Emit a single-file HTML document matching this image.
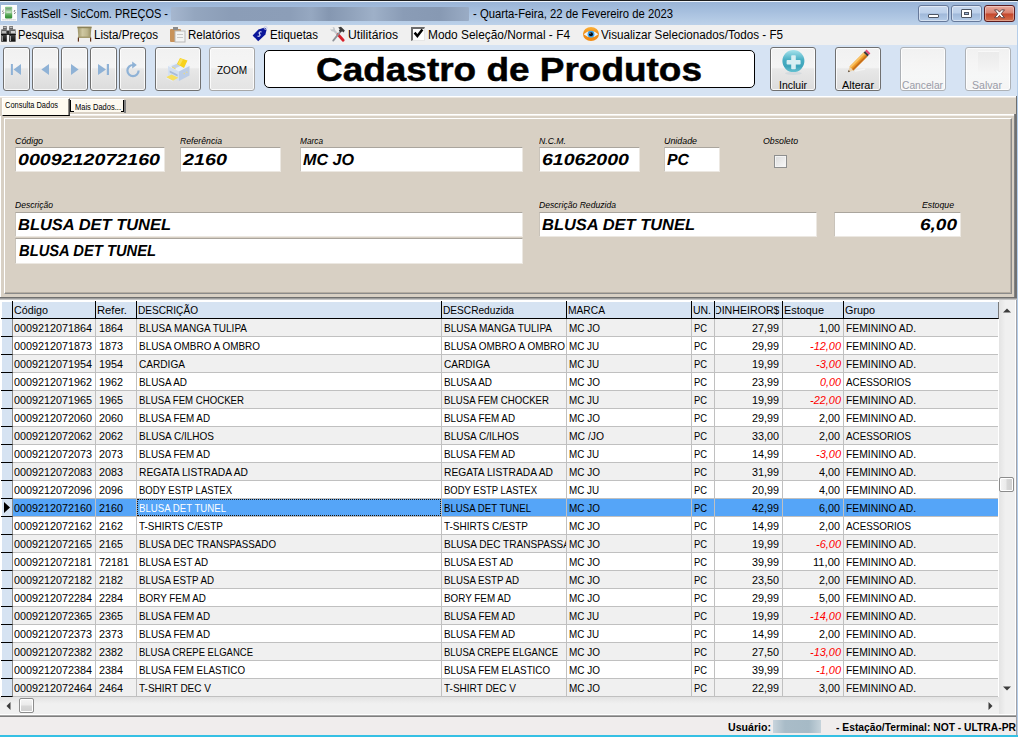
<!DOCTYPE html>
<html><head><meta charset="utf-8"><title>FastSell - SicCom. PREÇOS</title>
<style>
html,body{margin:0;padding:0;}
body{width:1018px;height:737px;overflow:hidden;position:relative;background:#d8d0c4;font-family:'Liberation Sans',sans-serif;}
#w{position:absolute;left:0;top:0;width:1018px;height:737px;overflow:hidden;}
#w div{position:absolute;box-sizing:border-box;}
#w svg{position:absolute;overflow:visible;}
.t{position:absolute;white-space:pre;transform-origin:0 0;display:block;}
</style></head><body><div id="w">
<div style="left:0px;top:0px;width:1018px;height:737px;background:#d8d0c4;"></div>
<div style="left:0px;top:0px;width:1018px;height:25px;background:linear-gradient(#97b2d5 0%,#a6bfde 45%,#bcd1e9 100%);"></div>
<div style="left:0px;top:0px;width:1018px;height:1px;background:#1c1c1c;"></div>
<div style="left:0px;top:1px;width:1018px;height:1px;background:#eef4fb;"></div>
<div style="left:171px;top:7px;width:298px;height:14px;background:linear-gradient(90deg,#a6b7cf 0%,#94a6bf 8%,#8b9db7 20%,#8c9eb8 40%,#96a8c1 47%,#8597b1 53%,#90a2bb 60%,#9eb0c8 68%,#8a9cb6 78%,#8799b3 90%,#9aacc5 100%);border-radius:1px;"></div>
<svg style="left:1px;top:5px" width="16" height="16" viewBox="0 0 16 16"><defs><linearGradient id="ai" x1="0" y1="0" x2="0" y2="1"><stop offset="0" stop-color="#7fc080"/><stop offset="0.45" stop-color="#a9d3a6"/><stop offset="0.7" stop-color="#58a858"/><stop offset="1" stop-color="#2c8a2e"/></linearGradient></defs><rect x="0" y="0" width="16" height="16" fill="#fdfdfd"/><rect x="4" y="1.8" width="7.2" height="11.6" rx="0.8" fill="url(#ai)"/><rect x="5" y="3.2" width="5" height="1.2" fill="#7a9a80"/><rect x="5.4" y="6.6" width="4.4" height="1" fill="#e4eee4"/><path d="M2.6 5 L1.4 6.2 L2.8 7.6 L1.6 9" stroke="#7a7a7a" stroke-width="1" fill="none"/><path d="M14.2 5 L13 6.2 L14.4 7.6 L13.2 9" stroke="#7a7a7a" stroke-width="1" fill="none"/><path d="M1.5 14.8 L14.5 14.8" stroke="#b4b4b4" stroke-width="0.9" stroke-dasharray="1.2 0.8"/></svg>
<div style="left:918px;top:5px;width:31px;height:17px;border:1px solid #66799a;border-radius:3px;background:linear-gradient(#c7d8ee 0%,#bcd0ea 48%,#9fb8d9 52%,#b4cbe7 100%);box-shadow:inset 0 0 0 1px rgba(255,255,255,.45);"></div>
<div style="left:951px;top:5px;width:31px;height:17px;border:1px solid #66799a;border-radius:3px;background:linear-gradient(#c7d8ee 0%,#bcd0ea 48%,#9fb8d9 52%,#b4cbe7 100%);box-shadow:inset 0 0 0 1px rgba(255,255,255,.45);"></div>
<div style="left:984px;top:5px;width:31px;height:17px;border:1px solid #5a1b1f;border-radius:3px;background:linear-gradient(#e8a99d 0%,#d8806e 48%,#c4452b 52%,#d4714d 100%);box-shadow:inset 0 0 0 1px rgba(255,255,255,.35);"></div>
<div style="left:928px;top:14px;width:11px;height:4px;background:#fff;border:1px solid #4d5563;border-radius:1px;"></div>
<div style="left:961px;top:9px;width:11px;height:9px;background:#fff;border:1px solid #4d5563;border-radius:1px;"></div>
<div style="left:964px;top:12px;width:5px;height:3px;background:#9db4d6;border:1px solid #4d5563;"></div>
<svg style="left:993px;top:9px" width="13" height="9.6" viewBox="0 0 13 11" preserveAspectRatio="none"><path d="M1.5 1 L4.5 1 L6.5 3.6 L8.5 1 L11.5 1 L8.2 5.5 L11.5 10 L8.5 10 L6.5 7.4 L4.5 10 L1.5 10 L4.8 5.5 Z" fill="#fff" stroke="#5a3a3a" stroke-width="1"/></svg>
<div style="left:0px;top:25px;width:1018px;height:20px;background:#f0f0f0;"></div>
<div style="left:1017px;top:1px;width:1px;height:736px;background:#b4cde9;"></div>
<svg style="left:0px;top:26px" width="16" height="17" viewBox="0 0 16 17"><defs><linearGradient id="bn" x1="0" y1="0" x2="0" y2="1"><stop offset="0" stop-color="#6a6a6a"/><stop offset="1" stop-color="#0c0c0c"/></linearGradient></defs><rect x="3" y="0.3" width="3.8" height="3.2" fill="#4c4c4c"/><rect x="9.2" y="0.3" width="3.8" height="3.2" fill="#4c4c4c"/><rect x="3.4" y="1.2" width="3" height="1" fill="#d8d8d8"/><rect x="9.6" y="1.2" width="3" height="1" fill="#d8d8d8"/><rect x="1.2" y="3.3" width="5.6" height="12.4" fill="url(#bn)"/><rect x="9.2" y="3.3" width="6.4" height="12.4" fill="url(#bn)"/><rect x="6.8" y="4.5" width="2.4" height="4.5" fill="#2c2c2c"/><rect x="2" y="5" width="4" height="2.4" fill="#b8b8b8"/><rect x="10.8" y="5" width="4.2" height="2.4" fill="#d0d0d0"/><rect x="1" y="8" width="5.8" height="1" fill="#101010"/><rect x="9.2" y="8" width="6.6" height="1" fill="#101010"/><rect x="1.8" y="10" width="1" height="5" fill="#a8a8a8"/><rect x="10" y="10" width="1" height="5" fill="#a8a8a8"/></svg>
<svg style="left:77px;top:26px" width="15" height="16" viewBox="0 0 15 16"><defs><linearGradient id="pg" x1="0" y1="0" x2="1" y2="0"><stop offset="0" stop-color="#9c9468"/><stop offset="0.35" stop-color="#cfc8a2"/><stop offset="0.7" stop-color="#bdb58c"/><stop offset="1" stop-color="#938a5e"/></linearGradient></defs><path d="M0.6 1.2 L14.4 1.2 L13.6 11.6 L1.4 11.6 Z" fill="url(#pg)"/><rect x="0.4" y="0.6" width="14.2" height="1.6" fill="#8c8258"/><path d="M1 10.4 L14 10.4 L13.8 12 L1.2 12 Z" fill="#a59c70"/><rect x="0.8" y="11.6" width="1.2" height="4" fill="#5e2e18"/><rect x="13" y="11.6" width="1.2" height="4" fill="#5e2e18"/></svg>
<svg style="left:170px;top:27px" width="16" height="16" viewBox="0 0 16 16"><rect x="0" y="2" width="11" height="13" rx="1" fill="#c8925a"/><rect x="3" y="0" width="5" height="3" fill="#8a8a8a"/><rect x="5" y="4" width="10" height="11" fill="#f4f4f4" stroke="#b8b8b8" stroke-width="1"/><rect x="7" y="7" width="6" height="1" fill="#c8c8c8"/><rect x="7" y="10" width="6" height="1" fill="#c8c8c8"/></svg>
<svg style="left:252px;top:26px" width="16" height="17" viewBox="0 0 16 17"><path d="M6.4 3.6 L12.8 1.6 L14.6 3.4 L13.4 8.4 L6.2 15.2 L0.6 9.4 Z" fill="#0a169a"/><circle cx="13.6" cy="2" r="1.5" fill="none" stroke="#c8cce8" stroke-width="0.9"/><path d="M9.6 6.2 C8.2 5 6.2 6.6 7.6 8 C9 9.4 7 11 5.6 9.8" stroke="#e8ebff" stroke-width="1.1" fill="none"/></svg>
<svg style="left:330px;top:26px" width="16" height="17" viewBox="0 0 16 17"><path d="M3 3.5 L8.5 9" stroke="#c4c8cc" stroke-width="2.2"/><circle cx="2.8" cy="3.2" r="2.2" fill="#c4c8cc"/><circle cx="1.9" cy="2.2" r="1.2" fill="#f0f0f0"/><path d="M8 8.5 L13.2 14.2" stroke="#d8202a" stroke-width="2.8" stroke-linecap="round"/><path d="M10.6 5.4 L3.2 14.6" stroke="#8e9298" stroke-width="1.8" stroke-linecap="round"/><path d="M8.2 1.4 L11 0.8 L14.8 4.6 L13.6 6.4 L12 5.2 L10.6 6.4 L8.8 4.4 L9.8 3.2 Z" fill="#3c3c3c"/></svg>
<div style="left:411px;top:27px;width:14px;height:14px;background:#fff;border-top:2px solid #6c6c6c;border-left:2px solid #6c6c6c;border-right:1px solid #e6e6e6;border-bottom:1px solid #e6e6e6;"></div>
<svg style="left:413px;top:28px" width="11" height="11" viewBox="0 0 11 11"><path d="M1.6 4.6 L4.4 8 L9.4 1.6" stroke="#000" stroke-width="2.5" fill="none" stroke-linejoin="miter"/></svg>
<svg style="left:583px;top:27px" width="16" height="14" viewBox="0 0 16 14"><defs><linearGradient id="eo" x1="0" y1="0" x2="0" y2="1"><stop offset="0" stop-color="#fbb23a"/><stop offset="0.5" stop-color="#f08a12"/><stop offset="1" stop-color="#f28c14"/></linearGradient></defs><ellipse cx="8" cy="7" rx="8" ry="7" fill="url(#eo)"/><path d="M0.6 7.2 Q8 0.6 15.4 7.2 Q8 13.4 0.6 7.2 Z" fill="#eef4fa"/><circle cx="8" cy="7.2" r="3.4" fill="#3a9fe6"/><circle cx="8" cy="7.3" r="2" fill="#0a0a0a"/><circle cx="7" cy="6.2" r="0.8" fill="#8a8a8a"/></svg>
<div style="left:0px;top:45px;width:1017px;height:51px;background:#d6e3f3;"></div>
<div style="left:3px;top:47px;width:27px;height:44px;border:1px solid #707070;border-radius:3px;background:linear-gradient(#f1f1f1 0%,#f4f4f4 46%,#e8e8e8 50%,#dcdcdc 100%);box-shadow:inset 0 0 0 1px rgba(255,255,255,.8);"></div>
<div style="left:32px;top:47px;width:27px;height:44px;border:1px solid #707070;border-radius:3px;background:linear-gradient(#f1f1f1 0%,#f4f4f4 46%,#e8e8e8 50%,#dcdcdc 100%);box-shadow:inset 0 0 0 1px rgba(255,255,255,.8);"></div>
<div style="left:61px;top:47px;width:27px;height:44px;border:1px solid #707070;border-radius:3px;background:linear-gradient(#f1f1f1 0%,#f4f4f4 46%,#e8e8e8 50%,#dcdcdc 100%);box-shadow:inset 0 0 0 1px rgba(255,255,255,.8);"></div>
<div style="left:90px;top:47px;width:27px;height:44px;border:1px solid #707070;border-radius:3px;background:linear-gradient(#f1f1f1 0%,#f4f4f4 46%,#e8e8e8 50%,#dcdcdc 100%);box-shadow:inset 0 0 0 1px rgba(255,255,255,.8);"></div>
<div style="left:119px;top:47px;width:27px;height:44px;border:1px solid #707070;border-radius:3px;background:linear-gradient(#f1f1f1 0%,#f4f4f4 46%,#e8e8e8 50%,#dcdcdc 100%);box-shadow:inset 0 0 0 1px rgba(255,255,255,.8);"></div>
<svg style="left:10px;top:63px" width="14" height="13" viewBox="0 0 14 13"><rect x="0.9" y="1" width="2" height="11" fill="#8fb2d6"/><path d="M11 1 L11 12 L3.6 6.5 Z" fill="#8fb2d6"/></svg>
<svg style="left:40px;top:63px" width="12" height="13" viewBox="0 0 12 13"><path d="M9 1 L9 12 L1.4 6.5 Z" fill="#8fb2d6"/></svg>
<svg style="left:69px;top:63px" width="12" height="13" viewBox="0 0 12 13"><path d="M2 1 L2 12 L9.6 6.5 Z" fill="#8fb2d6"/></svg>
<svg style="left:96px;top:63px" width="14" height="13" viewBox="0 0 14 13"><rect x="10.8" y="1" width="2.2" height="11" fill="#8fb2d6"/><path d="M2 1 L2 12 L10 6.5 Z" fill="#8fb2d6"/></svg>
<svg style="left:124.6px;top:61px" width="16" height="17" viewBox="0 0 16 17"><path d="M8 4 A5.6 5.6 0 1 0 13.6 9.6" stroke="#8fb2d6" stroke-width="2.2" fill="none"/><path d="M7.2 0.4 L11.8 4 L7.2 7.6 Z" fill="#8fb2d6"/></svg>
<div style="left:155px;top:47px;width:46px;height:44px;border:1px solid #707070;border-radius:3px;background:linear-gradient(#f1f1f1 0%,#f4f4f4 46%,#e8e8e8 50%,#dcdcdc 100%);box-shadow:inset 0 0 0 1px rgba(255,255,255,.8);"></div>
<svg style="left:165px;top:56px" width="26" height="27" viewBox="0 0 26 27"><path d="M3 10 L13 5.5 L24.5 10 L14 15.5 Z" fill="#e9f0fa"/><path d="M3 10 L14 15.5 L14 25 L3 20 Z" fill="#d3e0f2"/><path d="M14 15.5 L24.5 10 L24.5 19.5 L14 25 Z" fill="#bccde7"/><path d="M6 10.2 L12.6 7.4 L17 9.2 L10.4 12.2 Z" fill="#c4d2e6"/><path d="M7.2 11.2 L10.6 12.8" stroke="#e8d060" stroke-width="1"/><path d="M12 8 L15 2 L22.5 4.5 L19 12 Z" fill="#f7d21e"/><path d="M12.8 8 L15.4 2.8 L18 3.6 L15 9.2 Z" fill="#fbe25a"/><path d="M4.6 14.4 L12.6 18.4 L12.6 20.4 L4.6 16.4 Z" fill="#a9bcd9"/><path d="M1 21.2 L6.6 18.4 L13.4 21.8 L7.8 24.8 Z" fill="#f6df62"/><path d="M1 21.2 L7.8 24.8 L7.8 25.8 L1 22.2 Z" fill="#e8ecf2"/><circle cx="19.2" cy="17.6" r="0.8" fill="#e8d88a"/><circle cx="21.8" cy="16.2" r="0.8" fill="#e8d88a"/></svg>
<div style="left:209px;top:47px;width:46px;height:44px;border:1px solid #a6a6a6;border-radius:3px;background:linear-gradient(#f3f3f3 0%,#f5f5f5 46%,#ebebeb 50%,#e4e4e4 100%);box-shadow:inset 0 0 0 1px rgba(255,255,255,.8);"></div>
<div style="left:264px;top:50px;width:491px;height:38px;background:#fff;border:1px solid #000;border-radius:5px;"></div>
<div style="left:770px;top:47px;width:46px;height:44px;border:1px solid #707070;border-radius:3px;background:linear-gradient(#f1f1f1 0%,#f4f4f4 46%,#e8e8e8 50%,#dcdcdc 100%);box-shadow:inset 0 0 0 1px rgba(255,255,255,.8);"></div>
<div style="left:835px;top:47px;width:46px;height:44px;border:1px solid #707070;border-radius:3px;background:linear-gradient(#f1f1f1 0%,#f4f4f4 46%,#e8e8e8 50%,#dcdcdc 100%);box-shadow:inset 0 0 0 1px rgba(255,255,255,.8);"></div>
<div style="left:900px;top:47px;width:46px;height:44px;border:1px solid #adb1b6;border-radius:3px;background:linear-gradient(#f1f1f1 0%,#f5f5f5 40%,#f6f7f7 70%,#f4f4f4 100%);box-shadow:inset 0 0 0 1px rgba(255,255,255,.8);"></div>
<div style="left:965px;top:47px;width:46px;height:44px;border:1px solid #adb1b6;border-radius:3px;background:linear-gradient(#f1f1f1 0%,#f5f5f5 40%,#f6f7f7 70%,#f4f4f4 100%);box-shadow:inset 0 0 0 1px rgba(255,255,255,.8);"></div>
<svg style="left:781px;top:49px" width="25" height="27" viewBox="0 0 25 27"><defs><linearGradient id="gi" x1="0" y1="0" x2="0" y2="1"><stop offset="0" stop-color="#a6e2ec"/><stop offset="0.45" stop-color="#48aec3"/><stop offset="0.75" stop-color="#3fa5bb"/><stop offset="1" stop-color="#66c2d2"/></linearGradient></defs><ellipse cx="12.4" cy="24.3" rx="8.5" ry="1.6" fill="#d4dade"/><circle cx="12.4" cy="12.1" r="11" fill="url(#gi)"/><rect x="10.2" y="6.2" width="4.6" height="14" rx="0.8" fill="#d9eff3"/><rect x="5.6" y="10.9" width="14" height="4.6" rx="0.8" fill="#d9eff3"/></svg>
<svg style="left:846px;top:48px" width="26" height="26" viewBox="0 0 26 26"><path d="M9 23.2 L19 21.2" stroke="#f4f4f4" stroke-width="1.2"/><path d="M1.9 24.3 L3.6 18.6 L7.4 22.4 Z" fill="#ecd2ac"/><path d="M1.9 24.3 L2.6 22 L4.1 23.5 Z" fill="#5a4a3a"/><path d="M3.6 18.6 L17.6 4.6 L21.4 8.4 L7.4 22.4 Z" fill="#ef9c28"/><path d="M3.6 18.6 L17.6 4.6 L18.9 5.9 L4.9 19.9 Z" fill="#f9c367"/><path d="M6.1 21.1 L20.1 7.1 L21.4 8.4 L7.4 22.4 Z" fill="#c8701c"/><path d="M17.6 4.6 L19.2 3 L23 6.8 L21.4 8.4 Z" fill="#3a3a3a"/><path d="M19.2 3 L20.6 1.6 L24.4 5.4 L23 6.8 Z" fill="#ea4878"/></svg>
<div style="left:978px;top:51px;width:21px;height:21px;background:linear-gradient(#ebebeb,#f0f0f0 60%,#f5f5f5);border-top:1px solid #f8f8f8;"></div>
<div style="left:0px;top:96px;width:1017px;height:1px;background:#ffffff;"></div>
<div style="left:0px;top:97px;width:1017px;height:1px;background:#ebe6df;"></div>
<div style="left:0px;top:98px;width:1017px;height:200px;background:#d8d0c4;"></div>
<div style="left:2px;top:98px;width:68px;height:18px;background:#fffbf0;border-right:1px solid #404040;border-bottom:1px solid #000;border-left:1px solid #fff;border-top:1px solid #fff;"></div>
<div style="left:68px;top:99px;width:1px;height:16px;background:#8e8a84;"></div>
<div style="left:70px;top:99px;width:54px;height:1px;background:#fff;"></div>
<div style="left:71px;top:100px;width:53px;height:12px;background:#fdf9ef;"></div>
<div style="left:70px;top:100px;width:1px;height:12px;background:#000;"></div>
<div style="left:70px;top:111px;width:4px;height:1px;background:#000;"></div>
<div style="left:123px;top:100px;width:1px;height:12px;background:#000;"></div>
<div style="left:121px;top:111px;width:3px;height:1px;background:#000;"></div>
<div style="left:124px;top:100px;width:2px;height:13px;background:#808080;"></div>
<div style="left:70px;top:114px;width:945px;height:1px;background:#fff;"></div>
<div style="left:70px;top:115px;width:945px;height:1px;background:#f2eee8;"></div>
<div style="left:0px;top:116px;width:1px;height:181px;background:#fff;"></div>
<div style="left:1016px;top:96px;width:1px;height:20px;background:#6e6e6e;"></div>
<div style="left:1014px;top:114px;width:3px;height:184px;background:linear-gradient(90deg,#8c8c8c,#6a6a6a 60%,#787878);"></div>
<div style="left:0px;top:297px;width:1017px;height:1px;background:#6e6e6e;"></div>
<div style="left:0px;top:298px;width:1017px;height:1px;background:#9c9c9c;"></div>
<div style="left:0px;top:299px;width:1017px;height:1px;background:#c4c4c4;"></div>
<div style="left:4px;top:118px;width:1008px;height:176px;background:#d8d0c4;border-top:1px solid #fff;border-left:1px solid #fff;border-right:1px solid #8a8a8a;border-bottom:1px solid #8a8a8a;"></div>
<div style="left:5px;top:119px;width:1006px;height:174px;border-right:1px solid #b5ada2;border-bottom:1px solid #b5ada2;"></div>
<div style="left:15px;top:147px;width:150px;height:25px;background:#fff;border-top:1px solid #aaa59d;border-left:1px solid #c9c3ba;border-right:1px solid #ece8e2;border-bottom:1px solid #ece8e2;"></div>
<div style="left:180px;top:147px;width:101px;height:25px;background:#fff;border-top:1px solid #aaa59d;border-left:1px solid #c9c3ba;border-right:1px solid #ece8e2;border-bottom:1px solid #ece8e2;"></div>
<div style="left:300px;top:147px;width:223px;height:25px;background:#fff;border-top:1px solid #aaa59d;border-left:1px solid #c9c3ba;border-right:1px solid #ece8e2;border-bottom:1px solid #ece8e2;"></div>
<div style="left:539px;top:147px;width:101px;height:25px;background:#fff;border-top:1px solid #aaa59d;border-left:1px solid #c9c3ba;border-right:1px solid #ece8e2;border-bottom:1px solid #ece8e2;"></div>
<div style="left:664px;top:147px;width:56px;height:25px;background:#fff;border-top:1px solid #aaa59d;border-left:1px solid #c9c3ba;border-right:1px solid #ece8e2;border-bottom:1px solid #ece8e2;"></div>
<div style="left:774px;top:155px;width:13px;height:13px;background:linear-gradient(135deg,#dcdcdc,#f8f8f8);border:1px solid #8e8f8f;box-shadow:inset 0 0 0 1px #f4f4f4;"></div>
<div style="left:15px;top:212px;width:508px;height:25px;background:#fff;border-top:1px solid #aaa59d;border-left:1px solid #c9c3ba;border-right:1px solid #ece8e2;border-bottom:1px solid #ece8e2;"></div>
<div style="left:15px;top:238px;width:508px;height:26px;background:#fff;border-top:1px solid #aaa59d;border-left:1px solid #c9c3ba;border-right:1px solid #ece8e2;border-bottom:1px solid #ece8e2;"></div>
<div style="left:539px;top:212px;width:278px;height:25px;background:#fff;border-top:1px solid #aaa59d;border-left:1px solid #c9c3ba;border-right:1px solid #ece8e2;border-bottom:1px solid #ece8e2;"></div>
<div style="left:834px;top:212px;width:127px;height:25px;background:#fff;border-top:1px solid #aaa59d;border-left:1px solid #c9c3ba;border-right:1px solid #ece8e2;border-bottom:1px solid #ece8e2;"></div>
<div style="left:0px;top:300px;width:1017px;height:397px;background:#fff;"></div>
<div style="left:2px;top:302px;width:11px;height:17px;background:#d6e3f2;border-right:1px solid #000;border-bottom:1px solid #000;"></div>
<div style="left:12px;top:301px;width:1px;height:1px;background:#000;"></div>
<div style="left:13px;top:302px;width:83px;height:17px;background:#d6e3f2;border-right:1px solid #000;border-bottom:1px solid #000;"></div>
<div style="left:95px;top:301px;width:1px;height:1px;background:#000;"></div>
<div style="left:96px;top:302px;width:41px;height:17px;background:#d6e3f2;border-right:1px solid #000;border-bottom:1px solid #000;"></div>
<div style="left:136px;top:301px;width:1px;height:1px;background:#000;"></div>
<div style="left:137px;top:302px;width:305px;height:17px;background:#d6e3f2;border-right:1px solid #000;border-bottom:1px solid #000;"></div>
<div style="left:441px;top:301px;width:1px;height:1px;background:#000;"></div>
<div style="left:442px;top:302px;width:125px;height:17px;background:#d6e3f2;border-right:1px solid #000;border-bottom:1px solid #000;"></div>
<div style="left:566px;top:301px;width:1px;height:1px;background:#000;"></div>
<div style="left:567px;top:302px;width:125px;height:17px;background:#d6e3f2;border-right:1px solid #000;border-bottom:1px solid #000;"></div>
<div style="left:691px;top:301px;width:1px;height:1px;background:#000;"></div>
<div style="left:692px;top:302px;width:23px;height:17px;background:#d6e3f2;border-right:1px solid #000;border-bottom:1px solid #000;"></div>
<div style="left:714px;top:301px;width:1px;height:1px;background:#000;"></div>
<div style="left:715px;top:302px;width:68px;height:17px;background:#d6e3f2;border-right:1px solid #000;border-bottom:1px solid #000;"></div>
<div style="left:782px;top:301px;width:1px;height:1px;background:#000;"></div>
<div style="left:783px;top:302px;width:61px;height:17px;background:#d6e3f2;border-right:1px solid #000;border-bottom:1px solid #000;"></div>
<div style="left:843px;top:301px;width:1px;height:1px;background:#000;"></div>
<div style="left:844px;top:302px;width:155px;height:17px;background:#d6e3f2;border-right:1px solid #7a7a7a;border-bottom:1px solid #000;"></div>
<div style="left:1px;top:318px;width:1px;height:1px;background:#000;"></div>
<div style="left:2px;top:319px;width:11px;height:18px;background:#d6e3f2;border-right:1px solid #8c8c8c;border-bottom:1px solid #000;"></div>
<div style="left:1px;top:336px;width:1px;height:1px;background:#000;"></div>
<div style="left:13px;top:319px;width:985px;height:17px;background:#f0f0f0;"></div>
<div style="left:13px;top:336px;width:985px;height:1px;background:#c0c0c0;"></div>
<div style="left:2px;top:337px;width:11px;height:18px;background:#d6e3f2;border-right:1px solid #8c8c8c;border-bottom:1px solid #000;"></div>
<div style="left:1px;top:354px;width:1px;height:1px;background:#000;"></div>
<div style="left:13px;top:337px;width:985px;height:17px;background:#ffffff;"></div>
<div style="left:13px;top:354px;width:985px;height:1px;background:#c0c0c0;"></div>
<div style="left:2px;top:355px;width:11px;height:18px;background:#d6e3f2;border-right:1px solid #8c8c8c;border-bottom:1px solid #000;"></div>
<div style="left:1px;top:372px;width:1px;height:1px;background:#000;"></div>
<div style="left:13px;top:355px;width:985px;height:17px;background:#f0f0f0;"></div>
<div style="left:13px;top:372px;width:985px;height:1px;background:#c0c0c0;"></div>
<div style="left:2px;top:373px;width:11px;height:18px;background:#d6e3f2;border-right:1px solid #8c8c8c;border-bottom:1px solid #000;"></div>
<div style="left:1px;top:390px;width:1px;height:1px;background:#000;"></div>
<div style="left:13px;top:373px;width:985px;height:17px;background:#ffffff;"></div>
<div style="left:13px;top:390px;width:985px;height:1px;background:#c0c0c0;"></div>
<div style="left:2px;top:391px;width:11px;height:18px;background:#d6e3f2;border-right:1px solid #8c8c8c;border-bottom:1px solid #000;"></div>
<div style="left:1px;top:408px;width:1px;height:1px;background:#000;"></div>
<div style="left:13px;top:391px;width:985px;height:17px;background:#f0f0f0;"></div>
<div style="left:13px;top:408px;width:985px;height:1px;background:#c0c0c0;"></div>
<div style="left:2px;top:409px;width:11px;height:18px;background:#d6e3f2;border-right:1px solid #8c8c8c;border-bottom:1px solid #000;"></div>
<div style="left:1px;top:426px;width:1px;height:1px;background:#000;"></div>
<div style="left:13px;top:409px;width:985px;height:17px;background:#ffffff;"></div>
<div style="left:13px;top:426px;width:985px;height:1px;background:#c0c0c0;"></div>
<div style="left:2px;top:427px;width:11px;height:18px;background:#d6e3f2;border-right:1px solid #8c8c8c;border-bottom:1px solid #000;"></div>
<div style="left:1px;top:444px;width:1px;height:1px;background:#000;"></div>
<div style="left:13px;top:427px;width:985px;height:17px;background:#f0f0f0;"></div>
<div style="left:13px;top:444px;width:985px;height:1px;background:#c0c0c0;"></div>
<div style="left:2px;top:445px;width:11px;height:18px;background:#d6e3f2;border-right:1px solid #8c8c8c;border-bottom:1px solid #000;"></div>
<div style="left:1px;top:462px;width:1px;height:1px;background:#000;"></div>
<div style="left:13px;top:445px;width:985px;height:17px;background:#ffffff;"></div>
<div style="left:13px;top:462px;width:985px;height:1px;background:#c0c0c0;"></div>
<div style="left:2px;top:463px;width:11px;height:18px;background:#d6e3f2;border-right:1px solid #8c8c8c;border-bottom:1px solid #000;"></div>
<div style="left:1px;top:480px;width:1px;height:1px;background:#000;"></div>
<div style="left:13px;top:463px;width:985px;height:17px;background:#f0f0f0;"></div>
<div style="left:13px;top:480px;width:985px;height:1px;background:#c0c0c0;"></div>
<div style="left:2px;top:481px;width:11px;height:18px;background:#d6e3f2;border-right:1px solid #8c8c8c;border-bottom:1px solid #000;"></div>
<div style="left:1px;top:498px;width:1px;height:1px;background:#000;"></div>
<div style="left:13px;top:481px;width:985px;height:17px;background:#ffffff;"></div>
<div style="left:13px;top:498px;width:985px;height:1px;background:#c0c0c0;"></div>
<div style="left:2px;top:499px;width:11px;height:18px;background:#d6e3f2;border-right:1px solid #8c8c8c;border-bottom:1px solid #000;"></div>
<div style="left:1px;top:516px;width:1px;height:1px;background:#000;"></div>
<div style="left:13px;top:499px;width:985px;height:17px;background:#55a5f8;"></div>
<div style="left:13px;top:516px;width:985px;height:1px;background:#c0c0c0;"></div>
<div style="left:2px;top:517px;width:11px;height:18px;background:#d6e3f2;border-right:1px solid #8c8c8c;border-bottom:1px solid #000;"></div>
<div style="left:1px;top:534px;width:1px;height:1px;background:#000;"></div>
<div style="left:13px;top:517px;width:985px;height:17px;background:#ffffff;"></div>
<div style="left:13px;top:534px;width:985px;height:1px;background:#c0c0c0;"></div>
<div style="left:2px;top:535px;width:11px;height:18px;background:#d6e3f2;border-right:1px solid #8c8c8c;border-bottom:1px solid #000;"></div>
<div style="left:1px;top:552px;width:1px;height:1px;background:#000;"></div>
<div style="left:13px;top:535px;width:985px;height:17px;background:#f0f0f0;"></div>
<div style="left:13px;top:552px;width:985px;height:1px;background:#c0c0c0;"></div>
<div style="left:442px;top:535px;width:124px;height:17px;overflow:hidden;"><span class="t" style="left:2px;top:3px;font:11px 'Liberation Sans',sans-serif;line-height:12px;transform:scaleX(0.915)">BLUSA DEC TRANSPASSADO</span></div>
<div style="left:2px;top:553px;width:11px;height:18px;background:#d6e3f2;border-right:1px solid #8c8c8c;border-bottom:1px solid #000;"></div>
<div style="left:1px;top:570px;width:1px;height:1px;background:#000;"></div>
<div style="left:13px;top:553px;width:985px;height:17px;background:#ffffff;"></div>
<div style="left:13px;top:570px;width:985px;height:1px;background:#c0c0c0;"></div>
<div style="left:2px;top:571px;width:11px;height:18px;background:#d6e3f2;border-right:1px solid #8c8c8c;border-bottom:1px solid #000;"></div>
<div style="left:1px;top:588px;width:1px;height:1px;background:#000;"></div>
<div style="left:13px;top:571px;width:985px;height:17px;background:#f0f0f0;"></div>
<div style="left:13px;top:588px;width:985px;height:1px;background:#c0c0c0;"></div>
<div style="left:2px;top:589px;width:11px;height:18px;background:#d6e3f2;border-right:1px solid #8c8c8c;border-bottom:1px solid #000;"></div>
<div style="left:1px;top:606px;width:1px;height:1px;background:#000;"></div>
<div style="left:13px;top:589px;width:985px;height:17px;background:#ffffff;"></div>
<div style="left:13px;top:606px;width:985px;height:1px;background:#c0c0c0;"></div>
<div style="left:2px;top:607px;width:11px;height:18px;background:#d6e3f2;border-right:1px solid #8c8c8c;border-bottom:1px solid #000;"></div>
<div style="left:1px;top:624px;width:1px;height:1px;background:#000;"></div>
<div style="left:13px;top:607px;width:985px;height:17px;background:#f0f0f0;"></div>
<div style="left:13px;top:624px;width:985px;height:1px;background:#c0c0c0;"></div>
<div style="left:2px;top:625px;width:11px;height:18px;background:#d6e3f2;border-right:1px solid #8c8c8c;border-bottom:1px solid #000;"></div>
<div style="left:1px;top:642px;width:1px;height:1px;background:#000;"></div>
<div style="left:13px;top:625px;width:985px;height:17px;background:#ffffff;"></div>
<div style="left:13px;top:642px;width:985px;height:1px;background:#c0c0c0;"></div>
<div style="left:2px;top:643px;width:11px;height:18px;background:#d6e3f2;border-right:1px solid #8c8c8c;border-bottom:1px solid #000;"></div>
<div style="left:1px;top:660px;width:1px;height:1px;background:#000;"></div>
<div style="left:13px;top:643px;width:985px;height:17px;background:#f0f0f0;"></div>
<div style="left:13px;top:660px;width:985px;height:1px;background:#c0c0c0;"></div>
<div style="left:2px;top:661px;width:11px;height:18px;background:#d6e3f2;border-right:1px solid #8c8c8c;border-bottom:1px solid #000;"></div>
<div style="left:1px;top:678px;width:1px;height:1px;background:#000;"></div>
<div style="left:13px;top:661px;width:985px;height:17px;background:#ffffff;"></div>
<div style="left:13px;top:678px;width:985px;height:1px;background:#c0c0c0;"></div>
<div style="left:2px;top:679px;width:11px;height:18px;background:#d6e3f2;border-right:1px solid #8c8c8c;border-bottom:1px solid #000;"></div>
<div style="left:1px;top:696px;width:1px;height:1px;background:#000;"></div>
<div style="left:13px;top:679px;width:985px;height:17px;background:#f0f0f0;"></div>
<div style="left:13px;top:696px;width:985px;height:1px;background:#c0c0c0;"></div>
<div style="left:95px;top:319px;width:1px;height:378px;background:#c0c0c0;"></div>
<div style="left:136px;top:319px;width:1px;height:378px;background:#c0c0c0;"></div>
<div style="left:441px;top:319px;width:1px;height:378px;background:#c0c0c0;"></div>
<div style="left:566px;top:319px;width:1px;height:378px;background:#c0c0c0;"></div>
<div style="left:691px;top:319px;width:1px;height:378px;background:#c0c0c0;"></div>
<div style="left:714px;top:319px;width:1px;height:378px;background:#c0c0c0;"></div>
<div style="left:782px;top:319px;width:1px;height:378px;background:#c0c0c0;"></div>
<div style="left:843px;top:319px;width:1px;height:378px;background:#c0c0c0;"></div>
<div style="left:137px;top:499px;width:304px;height:17px;border:1px dotted #1a1208;"></div>
<svg style="left:4px;top:502px" width="6" height="11" viewBox="0 0 6 11"><path d="M0 0 L6 5.5 L0 11 Z" fill="#000"/></svg>
<div style="left:999px;top:300px;width:16px;height:414px;background:linear-gradient(90deg,#e3e3e3,#f0f0f0 40%,#f0f0f0);"></div>
<svg style="left:1003.4px;top:307.5px" width="8" height="5" viewBox="0 0 8 5"><path d="M0 4.5 L4 0.5 L8 4.5 Z" fill="#3c3c3c"/></svg>
<svg style="left:1003.4px;top:686.4px" width="8" height="5" viewBox="0 0 8 5"><path d="M0 0.5 L4 4.5 L8 0.5 Z" fill="#3c3c3c"/></svg>
<div style="left:999px;top:477px;width:15px;height:15px;border:1px solid #8c8c8c;border-radius:2px;background:linear-gradient(90deg,#f4f4f4 0%,#eaeaea 48%,#d8d8d8 52%,#cfcfcf 100%);box-shadow:inset 0 0 0 1px #fff;"></div>
<div style="left:0px;top:697px;width:999px;height:17px;background:linear-gradient(#e3e3e3,#f0f0f0 40%,#f0f0f0);"></div>
<div style="left:1015px;top:300px;width:1px;height:436px;background:#fff;"></div>
<div style="left:1016px;top:300px;width:1px;height:436px;background:#a2a2a8;"></div>
<svg style="left:6.3px;top:701.5px" width="5" height="8" viewBox="0 0 5 8"><path d="M4.5 0 L0.5 4 L4.5 8 Z" fill="#3c3c3c"/></svg>
<svg style="left:987.6px;top:701.5px" width="5" height="8" viewBox="0 0 5 8"><path d="M0.5 0 L4.5 4 L0.5 8 Z" fill="#3c3c3c"/></svg>
<div style="left:19px;top:698px;width:15px;height:15px;border:1px solid #8c8c8c;border-radius:2px;background:linear-gradient(#f4f4f4 0%,#eaeaea 48%,#d8d8d8 52%,#cfcfcf 100%);box-shadow:inset 0 0 0 1px #fff;"></div>
<div style="left:0px;top:714px;width:1016px;height:1px;background:#fff;"></div>
<div style="left:0px;top:715px;width:1016px;height:1px;background:#a8a8a8;"></div>
<div style="left:0px;top:716px;width:1016px;height:1px;background:#7e7e7e;"></div>
<div style="left:0px;top:717px;width:1016px;height:18px;background:#f0eded;"></div>
<div style="left:0px;top:735px;width:1018px;height:2px;background:#35c0e4;"></div>
<div style="left:773px;top:720px;width:48px;height:13px;background:linear-gradient(90deg,#c8d4dc,#a9bcc8 25%,#a6bac6 75%,#c6d3db);"></div>
<span class="t" style="left:21.00px;top:7.00px;font:normal normal 12px 'Liberation Sans',sans-serif;line-height:14px;color:#000;transform:scaleX(0.9147);">FastSell - SicCom. PREÇOS -</span>
<span class="t" style="left:473.00px;top:7.00px;font:normal normal 12px 'Liberation Sans',sans-serif;line-height:14px;color:#000;transform:scaleX(0.9399);">- Quarta-Feira, 22 de Fevereiro de 2023</span>
<span class="t" style="left:18.00px;top:28.00px;font:normal normal 12px 'Liberation Sans',sans-serif;line-height:14px;color:#000;transform:scaleX(0.9316);">Pesquisa</span>
<span class="t" style="left:94.00px;top:28.00px;font:normal normal 12px 'Liberation Sans',sans-serif;line-height:14px;color:#000;transform:scaleX(0.9692);">Lista/Preços</span>
<span class="t" style="left:188.00px;top:28.00px;font:normal normal 12px 'Liberation Sans',sans-serif;line-height:14px;color:#000;transform:scaleX(0.9624);">Relatórios</span>
<span class="t" style="left:270.00px;top:28.00px;font:normal normal 12px 'Liberation Sans',sans-serif;line-height:14px;color:#000;transform:scaleX(0.9591);">Etiquetas</span>
<span class="t" style="left:348.00px;top:28.00px;font:normal normal 12px 'Liberation Sans',sans-serif;line-height:14px;color:#000;transform:scaleX(1.0133);">Utilitários</span>
<span class="t" style="left:428.00px;top:28.00px;font:normal normal 12px 'Liberation Sans',sans-serif;line-height:14px;color:#000;transform:scaleX(0.9903);">Modo Seleção/Normal - F4</span>
<span class="t" style="left:601.00px;top:28.00px;font:normal normal 12px 'Liberation Sans',sans-serif;line-height:14px;color:#000;transform:scaleX(0.9721);">Visualizar Selecionados/Todos - F5</span>
<span class="t" style="left:217.00px;top:64.00px;font:normal normal 11px 'Liberation Sans',sans-serif;line-height:12px;color:#000;transform:scaleX(0.9091);">ZOOM</span>
<span class="t" style="left:316.00px;top:49.50px;font:normal bold 34px 'Liberation Sans',sans-serif;line-height:38px;color:#000;transform:scaleX(1.0868);-webkit-text-stroke:0.5px #000;">Cadastro de Produtos</span>
<span class="t" style="left:779.00px;top:79.00px;font:normal normal 11px 'Liberation Sans',sans-serif;line-height:12px;color:#000;transform:scaleX(0.9542);">Incluir</span>
<span class="t" style="left:842.00px;top:79.00px;font:normal normal 11px 'Liberation Sans',sans-serif;line-height:12px;color:#000;transform:scaleX(0.9875);">Alterar</span>
<span class="t" style="left:902.00px;top:79.00px;font:normal normal 11px 'Liberation Sans',sans-serif;line-height:12px;color:#9a9ca8;transform:scaleX(0.9312);">Cancelar</span>
<span class="t" style="left:972.00px;top:79.00px;font:normal normal 11px 'Liberation Sans',sans-serif;line-height:12px;color:#9a9ca8;transform:scaleX(0.9619);">Salvar</span>
<span class="t" style="left:5.00px;top:100.00px;font:normal normal 9px 'Liberation Sans',sans-serif;line-height:10px;color:#000;transform:scaleX(0.8275);">Consulta Dados</span>
<span class="t" style="left:75.00px;top:102.00px;font:normal normal 9px 'Liberation Sans',sans-serif;line-height:10px;color:#000;transform:scaleX(0.8359);">Mais Dados...</span>
<span class="t" style="left:15.00px;top:136.00px;font:italic normal 9px 'Liberation Sans',sans-serif;line-height:10px;color:#000;transform:scaleX(0.9814);">Código</span>
<span class="t" style="left:18.00px;top:152.00px;font:italic bold 16px 'Liberation Sans',sans-serif;line-height:17px;color:#000;transform:scaleX(1.2274);text-rendering:geometricPrecision;">0009212072160</span>
<span class="t" style="left:180.00px;top:136.00px;font:italic normal 9px 'Liberation Sans',sans-serif;line-height:10px;color:#000;transform:scaleX(0.9648);">Referência</span>
<span class="t" style="left:183.00px;top:152.00px;font:italic bold 16px 'Liberation Sans',sans-serif;line-height:17px;color:#000;transform:scaleX(1.2362);text-rendering:geometricPrecision;">2160</span>
<span class="t" style="left:300.00px;top:136.00px;font:italic normal 9px 'Liberation Sans',sans-serif;line-height:10px;color:#000;transform:scaleX(0.9194);">Marca</span>
<span class="t" style="left:303.00px;top:152.00px;font:italic bold 16px 'Liberation Sans',sans-serif;line-height:17px;color:#000;transform:scaleX(1.0065);text-rendering:geometricPrecision;">MC JO</span>
<span class="t" style="left:539.00px;top:136.00px;font:italic normal 9px 'Liberation Sans',sans-serif;line-height:10px;color:#000;transform:scaleX(0.9643);">N.C.M.</span>
<span class="t" style="left:542.00px;top:152.00px;font:italic bold 16px 'Liberation Sans',sans-serif;line-height:17px;color:#000;transform:scaleX(1.2221);text-rendering:geometricPrecision;">61062000</span>
<span class="t" style="left:664.00px;top:136.00px;font:italic normal 9px 'Liberation Sans',sans-serif;line-height:10px;color:#000;transform:scaleX(0.9842);">Unidade</span>
<span class="t" style="left:667.00px;top:152.00px;font:italic bold 16px 'Liberation Sans',sans-serif;line-height:17px;color:#000;transform:scaleX(0.9895);text-rendering:geometricPrecision;">PC</span>
<span class="t" style="left:763.00px;top:136.00px;font:italic normal 9px 'Liberation Sans',sans-serif;line-height:10px;color:#000;transform:scaleX(0.9714);">Obsoleto</span>
<span class="t" style="left:15.00px;top:200.00px;font:italic normal 9px 'Liberation Sans',sans-serif;line-height:10px;color:#000;transform:scaleX(0.9496);">Descrição</span>
<span class="t" style="left:18.00px;top:217.00px;font:italic bold 16px 'Liberation Sans',sans-serif;line-height:17px;color:#000;transform:scaleX(1.0287);text-rendering:geometricPrecision;">BLUSA DET TUNEL</span>
<span class="t" style="left:19.00px;top:243.00px;font:italic bold 16px 'Liberation Sans',sans-serif;line-height:17px;color:#000;transform:scaleX(0.9211);text-rendering:geometricPrecision;">BLUSA DET TUNEL</span>
<span class="t" style="left:539.00px;top:200.00px;font:italic normal 9px 'Liberation Sans',sans-serif;line-height:10px;color:#000;transform:scaleX(0.9560);">Descrição Reduzida</span>
<span class="t" style="left:542.00px;top:217.00px;font:italic bold 16px 'Liberation Sans',sans-serif;line-height:17px;color:#000;transform:scaleX(1.0287);text-rendering:geometricPrecision;">BLUSA DET TUNEL</span>
<span class="t" style="left:922.00px;top:200.00px;font:italic normal 9px 'Liberation Sans',sans-serif;line-height:10px;color:#000;transform:scaleX(0.9688);">Estoque</span>
<span class="t" style="left:920.00px;top:217.00px;font:italic bold 16px 'Liberation Sans',sans-serif;line-height:17px;color:#000;transform:scaleX(1.1882);text-rendering:geometricPrecision;">6,00</span>
<span class="t" style="left:14.00px;top:304.00px;font:normal normal 11px 'Liberation Sans',sans-serif;line-height:12px;color:#000;transform:scaleX(0.9753);">Código</span>
<span class="t" style="left:97.00px;top:304.00px;font:normal normal 11px 'Liberation Sans',sans-serif;line-height:12px;color:#000;transform:scaleX(1.0218);">Refer.</span>
<span class="t" style="left:138.00px;top:304.00px;font:normal normal 11px 'Liberation Sans',sans-serif;line-height:12px;color:#000;transform:scaleX(0.9173);">DESCRIÇÃO</span>
<span class="t" style="left:443.00px;top:304.00px;font:normal normal 11px 'Liberation Sans',sans-serif;line-height:12px;color:#000;transform:scaleX(0.9215);">DESCReduzida</span>
<span class="t" style="left:568.00px;top:304.00px;font:normal normal 11px 'Liberation Sans',sans-serif;line-height:12px;color:#000;transform:scaleX(0.9312);">MARCA</span>
<span class="t" style="left:693.00px;top:304.00px;font:normal normal 11px 'Liberation Sans',sans-serif;line-height:12px;color:#000;transform:scaleX(0.9497);">UN.</span>
<span class="t" style="left:784.00px;top:304.00px;font:normal normal 11px 'Liberation Sans',sans-serif;line-height:12px;color:#000;transform:scaleX(0.9907);">Estoque</span>
<span class="t" style="left:845.00px;top:304.00px;font:normal normal 11px 'Liberation Sans',sans-serif;line-height:12px;color:#000;transform:scaleX(0.9811);">Grupo</span>
<span class="t" style="left:713.50px;top:304.00px;font:normal normal 11px 'Liberation Sans',sans-serif;line-height:12px;color:#000;transform:scaleX(0.9655);clip-path:inset(0 0 0 2px);">DINHEIROR$</span>
<span class="t" style="left:13.60px;top:322.00px;font:normal normal 11px 'Liberation Sans',sans-serif;line-height:12px;color:#000;transform:scaleX(0.9807);">0009212071864</span>
<span class="t" style="left:99.30px;top:322.00px;font:normal normal 11px 'Liberation Sans',sans-serif;line-height:12px;color:#000;transform:scaleX(0.9802);">1864</span>
<span class="t" style="left:139.00px;top:322.00px;font:normal normal 11px 'Liberation Sans',sans-serif;line-height:12px;color:#000;transform:scaleX(0.9090);">BLUSA MANGA TULIPA</span>
<span class="t" style="left:444.00px;top:322.00px;font:normal normal 11px 'Liberation Sans',sans-serif;line-height:12px;color:#000;transform:scaleX(0.9090);">BLUSA MANGA TULIPA</span>
<span class="t" style="left:569.00px;top:322.00px;font:normal normal 11px 'Liberation Sans',sans-serif;line-height:12px;color:#000;transform:scaleX(0.9055);">MC JO</span>
<span class="t" style="left:694.00px;top:322.00px;font:normal normal 11px 'Liberation Sans',sans-serif;line-height:12px;color:#000;transform:scaleX(0.8507);">PC</span>
<span class="t" style="left:752.00px;top:322.00px;font:normal normal 11px 'Liberation Sans',sans-serif;line-height:12px;color:#000;transform:scaleX(0.9807);">27,99</span>
<span class="t" style="left:819.00px;top:322.00px;font:normal normal 11px 'Liberation Sans',sans-serif;line-height:12px;color:#000;transform:scaleX(0.9803);">1,00</span>
<span class="t" style="left:846.00px;top:322.00px;font:normal normal 11px 'Liberation Sans',sans-serif;line-height:12px;color:#000;transform:scaleX(0.9388);">FEMININO AD.</span>
<span class="t" style="left:13.60px;top:340.00px;font:normal normal 11px 'Liberation Sans',sans-serif;line-height:12px;color:#000;transform:scaleX(0.9807);">0009212071873</span>
<span class="t" style="left:99.30px;top:340.00px;font:normal normal 11px 'Liberation Sans',sans-serif;line-height:12px;color:#000;transform:scaleX(0.9802);">1873</span>
<span class="t" style="left:139.00px;top:340.00px;font:normal normal 11px 'Liberation Sans',sans-serif;line-height:12px;color:#000;transform:scaleX(0.9038);">BLUSA OMBRO A OMBRO</span>
<span class="t" style="left:444.00px;top:340.00px;font:normal normal 11px 'Liberation Sans',sans-serif;line-height:12px;color:#000;transform:scaleX(0.9038);">BLUSA OMBRO A OMBRO</span>
<span class="t" style="left:569.00px;top:340.00px;font:normal normal 11px 'Liberation Sans',sans-serif;line-height:12px;color:#000;transform:scaleX(0.8926);">MC JU</span>
<span class="t" style="left:694.00px;top:340.00px;font:normal normal 11px 'Liberation Sans',sans-serif;line-height:12px;color:#000;transform:scaleX(0.8507);">PC</span>
<span class="t" style="left:752.00px;top:340.00px;font:normal normal 11px 'Liberation Sans',sans-serif;line-height:12px;color:#000;transform:scaleX(0.9807);">29,99</span>
<span class="t" style="left:810.00px;top:340.00px;font:italic normal 11px 'Liberation Sans',sans-serif;line-height:12px;color:#ff0000;transform:scaleX(0.9935);">-12,00</span>
<span class="t" style="left:846.00px;top:340.00px;font:normal normal 11px 'Liberation Sans',sans-serif;line-height:12px;color:#000;transform:scaleX(0.9388);">FEMININO AD.</span>
<span class="t" style="left:13.60px;top:358.00px;font:normal normal 11px 'Liberation Sans',sans-serif;line-height:12px;color:#000;transform:scaleX(0.9807);">0009212071954</span>
<span class="t" style="left:99.30px;top:358.00px;font:normal normal 11px 'Liberation Sans',sans-serif;line-height:12px;color:#000;transform:scaleX(0.9802);">1954</span>
<span class="t" style="left:139.00px;top:358.00px;font:normal normal 11px 'Liberation Sans',sans-serif;line-height:12px;color:#000;transform:scaleX(0.9177);">CARDIGA</span>
<span class="t" style="left:444.00px;top:358.00px;font:normal normal 11px 'Liberation Sans',sans-serif;line-height:12px;color:#000;transform:scaleX(0.9177);">CARDIGA</span>
<span class="t" style="left:569.00px;top:358.00px;font:normal normal 11px 'Liberation Sans',sans-serif;line-height:12px;color:#000;transform:scaleX(0.8926);">MC JU</span>
<span class="t" style="left:694.00px;top:358.00px;font:normal normal 11px 'Liberation Sans',sans-serif;line-height:12px;color:#000;transform:scaleX(0.8507);">PC</span>
<span class="t" style="left:752.00px;top:358.00px;font:normal normal 11px 'Liberation Sans',sans-serif;line-height:12px;color:#000;transform:scaleX(0.9807);">19,99</span>
<span class="t" style="left:816.00px;top:358.00px;font:italic normal 11px 'Liberation Sans',sans-serif;line-height:12px;color:#ff0000;">-3,00</span>
<span class="t" style="left:846.00px;top:358.00px;font:normal normal 11px 'Liberation Sans',sans-serif;line-height:12px;color:#000;transform:scaleX(0.9388);">FEMININO AD.</span>
<span class="t" style="left:13.60px;top:376.00px;font:normal normal 11px 'Liberation Sans',sans-serif;line-height:12px;color:#000;transform:scaleX(0.9807);">0009212071962</span>
<span class="t" style="left:99.30px;top:376.00px;font:normal normal 11px 'Liberation Sans',sans-serif;line-height:12px;color:#000;transform:scaleX(0.9802);">1962</span>
<span class="t" style="left:139.00px;top:376.00px;font:normal normal 11px 'Liberation Sans',sans-serif;line-height:12px;color:#000;transform:scaleX(0.9022);">BLUSA AD</span>
<span class="t" style="left:444.00px;top:376.00px;font:normal normal 11px 'Liberation Sans',sans-serif;line-height:12px;color:#000;transform:scaleX(0.9022);">BLUSA AD</span>
<span class="t" style="left:569.00px;top:376.00px;font:normal normal 11px 'Liberation Sans',sans-serif;line-height:12px;color:#000;transform:scaleX(0.9055);">MC JO</span>
<span class="t" style="left:694.00px;top:376.00px;font:normal normal 11px 'Liberation Sans',sans-serif;line-height:12px;color:#000;transform:scaleX(0.8507);">PC</span>
<span class="t" style="left:752.00px;top:376.00px;font:normal normal 11px 'Liberation Sans',sans-serif;line-height:12px;color:#000;transform:scaleX(0.9807);">23,99</span>
<span class="t" style="left:820.00px;top:376.00px;font:italic normal 11px 'Liberation Sans',sans-serif;line-height:12px;color:#ff0000;transform:scaleX(0.9803);">0,00</span>
<span class="t" style="left:846.00px;top:376.00px;font:normal normal 11px 'Liberation Sans',sans-serif;line-height:12px;color:#000;transform:scaleX(0.8935);">ACESSORIOS</span>
<span class="t" style="left:13.60px;top:394.00px;font:normal normal 11px 'Liberation Sans',sans-serif;line-height:12px;color:#000;transform:scaleX(0.9807);">0009212071965</span>
<span class="t" style="left:99.30px;top:394.00px;font:normal normal 11px 'Liberation Sans',sans-serif;line-height:12px;color:#000;transform:scaleX(0.9802);">1965</span>
<span class="t" style="left:139.00px;top:394.00px;font:normal normal 11px 'Liberation Sans',sans-serif;line-height:12px;color:#000;transform:scaleX(0.8764);">BLUSA FEM CHOCKER</span>
<span class="t" style="left:444.00px;top:394.00px;font:normal normal 11px 'Liberation Sans',sans-serif;line-height:12px;color:#000;transform:scaleX(0.8764);">BLUSA FEM CHOCKER</span>
<span class="t" style="left:569.00px;top:394.00px;font:normal normal 11px 'Liberation Sans',sans-serif;line-height:12px;color:#000;transform:scaleX(0.8926);">MC JU</span>
<span class="t" style="left:694.00px;top:394.00px;font:normal normal 11px 'Liberation Sans',sans-serif;line-height:12px;color:#000;transform:scaleX(0.8507);">PC</span>
<span class="t" style="left:752.00px;top:394.00px;font:normal normal 11px 'Liberation Sans',sans-serif;line-height:12px;color:#000;transform:scaleX(0.9807);">19,99</span>
<span class="t" style="left:810.00px;top:394.00px;font:italic normal 11px 'Liberation Sans',sans-serif;line-height:12px;color:#ff0000;transform:scaleX(0.9935);">-22,00</span>
<span class="t" style="left:846.00px;top:394.00px;font:normal normal 11px 'Liberation Sans',sans-serif;line-height:12px;color:#000;transform:scaleX(0.9388);">FEMININO AD.</span>
<span class="t" style="left:13.60px;top:412.00px;font:normal normal 11px 'Liberation Sans',sans-serif;line-height:12px;color:#000;transform:scaleX(0.9807);">0009212072060</span>
<span class="t" style="left:99.30px;top:412.00px;font:normal normal 11px 'Liberation Sans',sans-serif;line-height:12px;color:#000;transform:scaleX(0.9802);">2060</span>
<span class="t" style="left:139.00px;top:412.00px;font:normal normal 11px 'Liberation Sans',sans-serif;line-height:12px;color:#000;transform:scaleX(0.8933);">BLUSA FEM AD</span>
<span class="t" style="left:444.00px;top:412.00px;font:normal normal 11px 'Liberation Sans',sans-serif;line-height:12px;color:#000;transform:scaleX(0.8933);">BLUSA FEM AD</span>
<span class="t" style="left:569.00px;top:412.00px;font:normal normal 11px 'Liberation Sans',sans-serif;line-height:12px;color:#000;transform:scaleX(0.9055);">MC JO</span>
<span class="t" style="left:694.00px;top:412.00px;font:normal normal 11px 'Liberation Sans',sans-serif;line-height:12px;color:#000;transform:scaleX(0.8507);">PC</span>
<span class="t" style="left:752.00px;top:412.00px;font:normal normal 11px 'Liberation Sans',sans-serif;line-height:12px;color:#000;transform:scaleX(0.9807);">29,99</span>
<span class="t" style="left:819.00px;top:412.00px;font:normal normal 11px 'Liberation Sans',sans-serif;line-height:12px;color:#000;transform:scaleX(0.9803);">2,00</span>
<span class="t" style="left:846.00px;top:412.00px;font:normal normal 11px 'Liberation Sans',sans-serif;line-height:12px;color:#000;transform:scaleX(0.9388);">FEMININO AD.</span>
<span class="t" style="left:13.60px;top:430.00px;font:normal normal 11px 'Liberation Sans',sans-serif;line-height:12px;color:#000;transform:scaleX(0.9807);">0009212072062</span>
<span class="t" style="left:99.30px;top:430.00px;font:normal normal 11px 'Liberation Sans',sans-serif;line-height:12px;color:#000;transform:scaleX(0.9802);">2062</span>
<span class="t" style="left:139.00px;top:430.00px;font:normal normal 11px 'Liberation Sans',sans-serif;line-height:12px;color:#000;transform:scaleX(0.9086);">BLUSA C/ILHOS</span>
<span class="t" style="left:444.00px;top:430.00px;font:normal normal 11px 'Liberation Sans',sans-serif;line-height:12px;color:#000;transform:scaleX(0.9086);">BLUSA C/ILHOS</span>
<span class="t" style="left:569.00px;top:430.00px;font:normal normal 11px 'Liberation Sans',sans-serif;line-height:12px;color:#000;transform:scaleX(0.9388);">MC /JO</span>
<span class="t" style="left:694.00px;top:430.00px;font:normal normal 11px 'Liberation Sans',sans-serif;line-height:12px;color:#000;transform:scaleX(0.8507);">PC</span>
<span class="t" style="left:752.00px;top:430.00px;font:normal normal 11px 'Liberation Sans',sans-serif;line-height:12px;color:#000;transform:scaleX(0.9807);">33,00</span>
<span class="t" style="left:819.00px;top:430.00px;font:normal normal 11px 'Liberation Sans',sans-serif;line-height:12px;color:#000;transform:scaleX(0.9803);">2,00</span>
<span class="t" style="left:846.00px;top:430.00px;font:normal normal 11px 'Liberation Sans',sans-serif;line-height:12px;color:#000;transform:scaleX(0.8935);">ACESSORIOS</span>
<span class="t" style="left:13.60px;top:448.00px;font:normal normal 11px 'Liberation Sans',sans-serif;line-height:12px;color:#000;transform:scaleX(0.9807);">0009212072073</span>
<span class="t" style="left:99.30px;top:448.00px;font:normal normal 11px 'Liberation Sans',sans-serif;line-height:12px;color:#000;transform:scaleX(0.9802);">2073</span>
<span class="t" style="left:139.00px;top:448.00px;font:normal normal 11px 'Liberation Sans',sans-serif;line-height:12px;color:#000;transform:scaleX(0.8933);">BLUSA FEM AD</span>
<span class="t" style="left:444.00px;top:448.00px;font:normal normal 11px 'Liberation Sans',sans-serif;line-height:12px;color:#000;transform:scaleX(0.8933);">BLUSA FEM AD</span>
<span class="t" style="left:569.00px;top:448.00px;font:normal normal 11px 'Liberation Sans',sans-serif;line-height:12px;color:#000;transform:scaleX(0.8926);">MC JU</span>
<span class="t" style="left:694.00px;top:448.00px;font:normal normal 11px 'Liberation Sans',sans-serif;line-height:12px;color:#000;transform:scaleX(0.8507);">PC</span>
<span class="t" style="left:752.00px;top:448.00px;font:normal normal 11px 'Liberation Sans',sans-serif;line-height:12px;color:#000;transform:scaleX(0.9807);">14,99</span>
<span class="t" style="left:816.00px;top:448.00px;font:italic normal 11px 'Liberation Sans',sans-serif;line-height:12px;color:#ff0000;">-3,00</span>
<span class="t" style="left:846.00px;top:448.00px;font:normal normal 11px 'Liberation Sans',sans-serif;line-height:12px;color:#000;transform:scaleX(0.9388);">FEMININO AD.</span>
<span class="t" style="left:13.60px;top:466.00px;font:normal normal 11px 'Liberation Sans',sans-serif;line-height:12px;color:#000;transform:scaleX(0.9807);">0009212072083</span>
<span class="t" style="left:99.30px;top:466.00px;font:normal normal 11px 'Liberation Sans',sans-serif;line-height:12px;color:#000;transform:scaleX(0.9802);">2083</span>
<span class="t" style="left:139.00px;top:466.00px;font:normal normal 11px 'Liberation Sans',sans-serif;line-height:12px;color:#000;transform:scaleX(0.9319);">REGATA LISTRADA AD</span>
<span class="t" style="left:444.00px;top:466.00px;font:normal normal 11px 'Liberation Sans',sans-serif;line-height:12px;color:#000;transform:scaleX(0.9319);">REGATA LISTRADA AD</span>
<span class="t" style="left:569.00px;top:466.00px;font:normal normal 11px 'Liberation Sans',sans-serif;line-height:12px;color:#000;transform:scaleX(0.9055);">MC JO</span>
<span class="t" style="left:694.00px;top:466.00px;font:normal normal 11px 'Liberation Sans',sans-serif;line-height:12px;color:#000;transform:scaleX(0.8507);">PC</span>
<span class="t" style="left:752.00px;top:466.00px;font:normal normal 11px 'Liberation Sans',sans-serif;line-height:12px;color:#000;transform:scaleX(0.9807);">31,99</span>
<span class="t" style="left:819.00px;top:466.00px;font:normal normal 11px 'Liberation Sans',sans-serif;line-height:12px;color:#000;transform:scaleX(0.9803);">4,00</span>
<span class="t" style="left:846.00px;top:466.00px;font:normal normal 11px 'Liberation Sans',sans-serif;line-height:12px;color:#000;transform:scaleX(0.9388);">FEMININO AD.</span>
<span class="t" style="left:13.60px;top:484.00px;font:normal normal 11px 'Liberation Sans',sans-serif;line-height:12px;color:#000;transform:scaleX(0.9807);">0009212072096</span>
<span class="t" style="left:99.30px;top:484.00px;font:normal normal 11px 'Liberation Sans',sans-serif;line-height:12px;color:#000;transform:scaleX(0.9802);">2096</span>
<span class="t" style="left:139.00px;top:484.00px;font:normal normal 11px 'Liberation Sans',sans-serif;line-height:12px;color:#000;transform:scaleX(0.8626);">BODY ESTP LASTEX</span>
<span class="t" style="left:444.00px;top:484.00px;font:normal normal 11px 'Liberation Sans',sans-serif;line-height:12px;color:#000;transform:scaleX(0.8626);">BODY ESTP LASTEX</span>
<span class="t" style="left:569.00px;top:484.00px;font:normal normal 11px 'Liberation Sans',sans-serif;line-height:12px;color:#000;transform:scaleX(0.8926);">MC JU</span>
<span class="t" style="left:694.00px;top:484.00px;font:normal normal 11px 'Liberation Sans',sans-serif;line-height:12px;color:#000;transform:scaleX(0.8507);">PC</span>
<span class="t" style="left:752.00px;top:484.00px;font:normal normal 11px 'Liberation Sans',sans-serif;line-height:12px;color:#000;transform:scaleX(0.9807);">20,99</span>
<span class="t" style="left:819.00px;top:484.00px;font:normal normal 11px 'Liberation Sans',sans-serif;line-height:12px;color:#000;transform:scaleX(0.9803);">4,00</span>
<span class="t" style="left:846.00px;top:484.00px;font:normal normal 11px 'Liberation Sans',sans-serif;line-height:12px;color:#000;transform:scaleX(0.9388);">FEMININO AD.</span>
<span class="t" style="left:13.60px;top:502.00px;font:normal normal 11px 'Liberation Sans',sans-serif;line-height:12px;color:#000;transform:scaleX(0.9807);">0009212072160</span>
<span class="t" style="left:99.30px;top:502.00px;font:normal normal 11px 'Liberation Sans',sans-serif;line-height:12px;color:#000;transform:scaleX(0.9802);">2160</span>
<span class="t" style="left:139.00px;top:502.00px;font:normal normal 11px 'Liberation Sans',sans-serif;line-height:12px;color:#fff;transform:scaleX(0.8766);">BLUSA DET TUNEL</span>
<span class="t" style="left:444.00px;top:502.00px;font:normal normal 11px 'Liberation Sans',sans-serif;line-height:12px;color:#000;transform:scaleX(0.8766);">BLUSA DET TUNEL</span>
<span class="t" style="left:569.00px;top:502.00px;font:normal normal 11px 'Liberation Sans',sans-serif;line-height:12px;color:#000;transform:scaleX(0.9055);">MC JO</span>
<span class="t" style="left:694.00px;top:502.00px;font:normal normal 11px 'Liberation Sans',sans-serif;line-height:12px;color:#000;transform:scaleX(0.8507);">PC</span>
<span class="t" style="left:752.00px;top:502.00px;font:normal normal 11px 'Liberation Sans',sans-serif;line-height:12px;color:#000;transform:scaleX(0.9807);">42,99</span>
<span class="t" style="left:819.00px;top:502.00px;font:normal normal 11px 'Liberation Sans',sans-serif;line-height:12px;color:#000;transform:scaleX(0.9803);">6,00</span>
<span class="t" style="left:846.00px;top:502.00px;font:normal normal 11px 'Liberation Sans',sans-serif;line-height:12px;color:#000;transform:scaleX(0.9388);">FEMININO AD.</span>
<span class="t" style="left:13.60px;top:520.00px;font:normal normal 11px 'Liberation Sans',sans-serif;line-height:12px;color:#000;transform:scaleX(0.9807);">0009212072162</span>
<span class="t" style="left:99.30px;top:520.00px;font:normal normal 11px 'Liberation Sans',sans-serif;line-height:12px;color:#000;transform:scaleX(0.9802);">2162</span>
<span class="t" style="left:139.00px;top:520.00px;font:normal normal 11px 'Liberation Sans',sans-serif;line-height:12px;color:#000;transform:scaleX(0.9061);">T-SHIRTS C/ESTP</span>
<span class="t" style="left:444.00px;top:520.00px;font:normal normal 11px 'Liberation Sans',sans-serif;line-height:12px;color:#000;transform:scaleX(0.9061);">T-SHIRTS C/ESTP</span>
<span class="t" style="left:569.00px;top:520.00px;font:normal normal 11px 'Liberation Sans',sans-serif;line-height:12px;color:#000;transform:scaleX(0.9055);">MC JO</span>
<span class="t" style="left:694.00px;top:520.00px;font:normal normal 11px 'Liberation Sans',sans-serif;line-height:12px;color:#000;transform:scaleX(0.8507);">PC</span>
<span class="t" style="left:752.00px;top:520.00px;font:normal normal 11px 'Liberation Sans',sans-serif;line-height:12px;color:#000;transform:scaleX(0.9807);">14,99</span>
<span class="t" style="left:819.00px;top:520.00px;font:normal normal 11px 'Liberation Sans',sans-serif;line-height:12px;color:#000;transform:scaleX(0.9803);">2,00</span>
<span class="t" style="left:846.00px;top:520.00px;font:normal normal 11px 'Liberation Sans',sans-serif;line-height:12px;color:#000;transform:scaleX(0.8935);">ACESSORIOS</span>
<span class="t" style="left:13.60px;top:538.00px;font:normal normal 11px 'Liberation Sans',sans-serif;line-height:12px;color:#000;transform:scaleX(0.9807);">0009212072165</span>
<span class="t" style="left:99.30px;top:538.00px;font:normal normal 11px 'Liberation Sans',sans-serif;line-height:12px;color:#000;transform:scaleX(0.9802);">2165</span>
<span class="t" style="left:139.00px;top:538.00px;font:normal normal 11px 'Liberation Sans',sans-serif;line-height:12px;color:#000;transform:scaleX(0.8881);">BLUSA DEC TRANSPASSADO</span>
<span class="t" style="left:569.00px;top:538.00px;font:normal normal 11px 'Liberation Sans',sans-serif;line-height:12px;color:#000;transform:scaleX(0.9055);">MC JO</span>
<span class="t" style="left:694.00px;top:538.00px;font:normal normal 11px 'Liberation Sans',sans-serif;line-height:12px;color:#000;transform:scaleX(0.8507);">PC</span>
<span class="t" style="left:752.00px;top:538.00px;font:normal normal 11px 'Liberation Sans',sans-serif;line-height:12px;color:#000;transform:scaleX(0.9807);">19,99</span>
<span class="t" style="left:816.00px;top:538.00px;font:italic normal 11px 'Liberation Sans',sans-serif;line-height:12px;color:#ff0000;">-6,00</span>
<span class="t" style="left:846.00px;top:538.00px;font:normal normal 11px 'Liberation Sans',sans-serif;line-height:12px;color:#000;transform:scaleX(0.9388);">FEMININO AD.</span>
<span class="t" style="left:13.60px;top:556.00px;font:normal normal 11px 'Liberation Sans',sans-serif;line-height:12px;color:#000;transform:scaleX(0.9807);">0009212072181</span>
<span class="t" style="left:99.30px;top:556.00px;font:normal normal 11px 'Liberation Sans',sans-serif;line-height:12px;color:#000;transform:scaleX(0.9806);">72181</span>
<span class="t" style="left:139.00px;top:556.00px;font:normal normal 11px 'Liberation Sans',sans-serif;line-height:12px;color:#000;transform:scaleX(0.8909);">BLUSA EST AD</span>
<span class="t" style="left:444.00px;top:556.00px;font:normal normal 11px 'Liberation Sans',sans-serif;line-height:12px;color:#000;transform:scaleX(0.8909);">BLUSA EST AD</span>
<span class="t" style="left:569.00px;top:556.00px;font:normal normal 11px 'Liberation Sans',sans-serif;line-height:12px;color:#000;transform:scaleX(0.9055);">MC JO</span>
<span class="t" style="left:694.00px;top:556.00px;font:normal normal 11px 'Liberation Sans',sans-serif;line-height:12px;color:#000;transform:scaleX(0.8507);">PC</span>
<span class="t" style="left:752.00px;top:556.00px;font:normal normal 11px 'Liberation Sans',sans-serif;line-height:12px;color:#000;transform:scaleX(0.9807);">39,99</span>
<span class="t" style="left:813.00px;top:556.00px;font:normal normal 11px 'Liberation Sans',sans-serif;line-height:12px;color:#000;transform:scaleX(1.0105);">11,00</span>
<span class="t" style="left:846.00px;top:556.00px;font:normal normal 11px 'Liberation Sans',sans-serif;line-height:12px;color:#000;transform:scaleX(0.9388);">FEMININO AD.</span>
<span class="t" style="left:13.60px;top:574.00px;font:normal normal 11px 'Liberation Sans',sans-serif;line-height:12px;color:#000;transform:scaleX(0.9807);">0009212072182</span>
<span class="t" style="left:99.30px;top:574.00px;font:normal normal 11px 'Liberation Sans',sans-serif;line-height:12px;color:#000;transform:scaleX(0.9802);">2182</span>
<span class="t" style="left:139.00px;top:574.00px;font:normal normal 11px 'Liberation Sans',sans-serif;line-height:12px;color:#000;transform:scaleX(0.8845);">BLUSA ESTP AD</span>
<span class="t" style="left:444.00px;top:574.00px;font:normal normal 11px 'Liberation Sans',sans-serif;line-height:12px;color:#000;transform:scaleX(0.8845);">BLUSA ESTP AD</span>
<span class="t" style="left:569.00px;top:574.00px;font:normal normal 11px 'Liberation Sans',sans-serif;line-height:12px;color:#000;transform:scaleX(0.9055);">MC JO</span>
<span class="t" style="left:694.00px;top:574.00px;font:normal normal 11px 'Liberation Sans',sans-serif;line-height:12px;color:#000;transform:scaleX(0.8507);">PC</span>
<span class="t" style="left:752.00px;top:574.00px;font:normal normal 11px 'Liberation Sans',sans-serif;line-height:12px;color:#000;transform:scaleX(0.9807);">23,50</span>
<span class="t" style="left:819.00px;top:574.00px;font:normal normal 11px 'Liberation Sans',sans-serif;line-height:12px;color:#000;transform:scaleX(0.9803);">2,00</span>
<span class="t" style="left:846.00px;top:574.00px;font:normal normal 11px 'Liberation Sans',sans-serif;line-height:12px;color:#000;transform:scaleX(0.9388);">FEMININO AD.</span>
<span class="t" style="left:13.60px;top:592.00px;font:normal normal 11px 'Liberation Sans',sans-serif;line-height:12px;color:#000;transform:scaleX(0.9807);">0009212072284</span>
<span class="t" style="left:99.30px;top:592.00px;font:normal normal 11px 'Liberation Sans',sans-serif;line-height:12px;color:#000;transform:scaleX(0.9802);">2284</span>
<span class="t" style="left:139.00px;top:592.00px;font:normal normal 11px 'Liberation Sans',sans-serif;line-height:12px;color:#000;transform:scaleX(0.8958);">BORY FEM AD</span>
<span class="t" style="left:444.00px;top:592.00px;font:normal normal 11px 'Liberation Sans',sans-serif;line-height:12px;color:#000;transform:scaleX(0.8958);">BORY FEM AD</span>
<span class="t" style="left:569.00px;top:592.00px;font:normal normal 11px 'Liberation Sans',sans-serif;line-height:12px;color:#000;transform:scaleX(0.9055);">MC JO</span>
<span class="t" style="left:694.00px;top:592.00px;font:normal normal 11px 'Liberation Sans',sans-serif;line-height:12px;color:#000;transform:scaleX(0.8507);">PC</span>
<span class="t" style="left:752.00px;top:592.00px;font:normal normal 11px 'Liberation Sans',sans-serif;line-height:12px;color:#000;transform:scaleX(0.9807);">29,99</span>
<span class="t" style="left:819.00px;top:592.00px;font:normal normal 11px 'Liberation Sans',sans-serif;line-height:12px;color:#000;transform:scaleX(0.9803);">5,00</span>
<span class="t" style="left:846.00px;top:592.00px;font:normal normal 11px 'Liberation Sans',sans-serif;line-height:12px;color:#000;transform:scaleX(0.9388);">FEMININO AD.</span>
<span class="t" style="left:13.60px;top:610.00px;font:normal normal 11px 'Liberation Sans',sans-serif;line-height:12px;color:#000;transform:scaleX(0.9807);">0009212072365</span>
<span class="t" style="left:99.30px;top:610.00px;font:normal normal 11px 'Liberation Sans',sans-serif;line-height:12px;color:#000;transform:scaleX(0.9802);">2365</span>
<span class="t" style="left:139.00px;top:610.00px;font:normal normal 11px 'Liberation Sans',sans-serif;line-height:12px;color:#000;transform:scaleX(0.8933);">BLUSA FEM AD</span>
<span class="t" style="left:444.00px;top:610.00px;font:normal normal 11px 'Liberation Sans',sans-serif;line-height:12px;color:#000;transform:scaleX(0.8933);">BLUSA FEM AD</span>
<span class="t" style="left:569.00px;top:610.00px;font:normal normal 11px 'Liberation Sans',sans-serif;line-height:12px;color:#000;transform:scaleX(0.8926);">MC JU</span>
<span class="t" style="left:694.00px;top:610.00px;font:normal normal 11px 'Liberation Sans',sans-serif;line-height:12px;color:#000;transform:scaleX(0.8507);">PC</span>
<span class="t" style="left:752.00px;top:610.00px;font:normal normal 11px 'Liberation Sans',sans-serif;line-height:12px;color:#000;transform:scaleX(0.9807);">19,99</span>
<span class="t" style="left:810.00px;top:610.00px;font:italic normal 11px 'Liberation Sans',sans-serif;line-height:12px;color:#ff0000;transform:scaleX(0.9935);">-14,00</span>
<span class="t" style="left:846.00px;top:610.00px;font:normal normal 11px 'Liberation Sans',sans-serif;line-height:12px;color:#000;transform:scaleX(0.9388);">FEMININO AD.</span>
<span class="t" style="left:13.60px;top:628.00px;font:normal normal 11px 'Liberation Sans',sans-serif;line-height:12px;color:#000;transform:scaleX(0.9807);">0009212072373</span>
<span class="t" style="left:99.30px;top:628.00px;font:normal normal 11px 'Liberation Sans',sans-serif;line-height:12px;color:#000;transform:scaleX(0.9802);">2373</span>
<span class="t" style="left:139.00px;top:628.00px;font:normal normal 11px 'Liberation Sans',sans-serif;line-height:12px;color:#000;transform:scaleX(0.8933);">BLUSA FEM AD</span>
<span class="t" style="left:444.00px;top:628.00px;font:normal normal 11px 'Liberation Sans',sans-serif;line-height:12px;color:#000;transform:scaleX(0.8933);">BLUSA FEM AD</span>
<span class="t" style="left:569.00px;top:628.00px;font:normal normal 11px 'Liberation Sans',sans-serif;line-height:12px;color:#000;transform:scaleX(0.8926);">MC JU</span>
<span class="t" style="left:694.00px;top:628.00px;font:normal normal 11px 'Liberation Sans',sans-serif;line-height:12px;color:#000;transform:scaleX(0.8507);">PC</span>
<span class="t" style="left:752.00px;top:628.00px;font:normal normal 11px 'Liberation Sans',sans-serif;line-height:12px;color:#000;transform:scaleX(0.9807);">14,99</span>
<span class="t" style="left:819.00px;top:628.00px;font:normal normal 11px 'Liberation Sans',sans-serif;line-height:12px;color:#000;transform:scaleX(0.9803);">2,00</span>
<span class="t" style="left:846.00px;top:628.00px;font:normal normal 11px 'Liberation Sans',sans-serif;line-height:12px;color:#000;transform:scaleX(0.9388);">FEMININO AD.</span>
<span class="t" style="left:13.60px;top:646.00px;font:normal normal 11px 'Liberation Sans',sans-serif;line-height:12px;color:#000;transform:scaleX(0.9807);">0009212072382</span>
<span class="t" style="left:99.30px;top:646.00px;font:normal normal 11px 'Liberation Sans',sans-serif;line-height:12px;color:#000;transform:scaleX(0.9802);">2382</span>
<span class="t" style="left:139.00px;top:646.00px;font:normal normal 11px 'Liberation Sans',sans-serif;line-height:12px;color:#000;transform:scaleX(0.8632);">BLUSA CREPE ELGANCE</span>
<span class="t" style="left:444.00px;top:646.00px;font:normal normal 11px 'Liberation Sans',sans-serif;line-height:12px;color:#000;transform:scaleX(0.8632);">BLUSA CREPE ELGANCE</span>
<span class="t" style="left:569.00px;top:646.00px;font:normal normal 11px 'Liberation Sans',sans-serif;line-height:12px;color:#000;transform:scaleX(0.9055);">MC JO</span>
<span class="t" style="left:694.00px;top:646.00px;font:normal normal 11px 'Liberation Sans',sans-serif;line-height:12px;color:#000;transform:scaleX(0.8507);">PC</span>
<span class="t" style="left:752.00px;top:646.00px;font:normal normal 11px 'Liberation Sans',sans-serif;line-height:12px;color:#000;transform:scaleX(0.9807);">27,50</span>
<span class="t" style="left:810.00px;top:646.00px;font:italic normal 11px 'Liberation Sans',sans-serif;line-height:12px;color:#ff0000;transform:scaleX(0.9935);">-13,00</span>
<span class="t" style="left:846.00px;top:646.00px;font:normal normal 11px 'Liberation Sans',sans-serif;line-height:12px;color:#000;transform:scaleX(0.9388);">FEMININO AD.</span>
<span class="t" style="left:13.60px;top:664.00px;font:normal normal 11px 'Liberation Sans',sans-serif;line-height:12px;color:#000;transform:scaleX(0.9807);">0009212072384</span>
<span class="t" style="left:99.30px;top:664.00px;font:normal normal 11px 'Liberation Sans',sans-serif;line-height:12px;color:#000;transform:scaleX(0.9802);">2384</span>
<span class="t" style="left:139.00px;top:664.00px;font:normal normal 11px 'Liberation Sans',sans-serif;line-height:12px;color:#000;transform:scaleX(0.8892);">BLUSA FEM ELASTICO</span>
<span class="t" style="left:444.00px;top:664.00px;font:normal normal 11px 'Liberation Sans',sans-serif;line-height:12px;color:#000;transform:scaleX(0.8892);">BLUSA FEM ELASTICO</span>
<span class="t" style="left:569.00px;top:664.00px;font:normal normal 11px 'Liberation Sans',sans-serif;line-height:12px;color:#000;transform:scaleX(0.9055);">MC JO</span>
<span class="t" style="left:694.00px;top:664.00px;font:normal normal 11px 'Liberation Sans',sans-serif;line-height:12px;color:#000;transform:scaleX(0.8507);">PC</span>
<span class="t" style="left:752.00px;top:664.00px;font:normal normal 11px 'Liberation Sans',sans-serif;line-height:12px;color:#000;transform:scaleX(0.9807);">39,99</span>
<span class="t" style="left:816.00px;top:664.00px;font:italic normal 11px 'Liberation Sans',sans-serif;line-height:12px;color:#ff0000;">-1,00</span>
<span class="t" style="left:846.00px;top:664.00px;font:normal normal 11px 'Liberation Sans',sans-serif;line-height:12px;color:#000;transform:scaleX(0.9388);">FEMININO AD.</span>
<span class="t" style="left:13.60px;top:682.00px;font:normal normal 11px 'Liberation Sans',sans-serif;line-height:12px;color:#000;transform:scaleX(0.9807);">0009212072464</span>
<span class="t" style="left:99.30px;top:682.00px;font:normal normal 11px 'Liberation Sans',sans-serif;line-height:12px;color:#000;transform:scaleX(0.9802);">2464</span>
<span class="t" style="left:139.00px;top:682.00px;font:normal normal 11px 'Liberation Sans',sans-serif;line-height:12px;color:#000;transform:scaleX(0.9107);">T-SHIRT DEC V</span>
<span class="t" style="left:444.00px;top:682.00px;font:normal normal 11px 'Liberation Sans',sans-serif;line-height:12px;color:#000;transform:scaleX(0.9107);">T-SHIRT DEC V</span>
<span class="t" style="left:569.00px;top:682.00px;font:normal normal 11px 'Liberation Sans',sans-serif;line-height:12px;color:#000;transform:scaleX(0.9055);">MC JO</span>
<span class="t" style="left:694.00px;top:682.00px;font:normal normal 11px 'Liberation Sans',sans-serif;line-height:12px;color:#000;transform:scaleX(0.8507);">PC</span>
<span class="t" style="left:752.00px;top:682.00px;font:normal normal 11px 'Liberation Sans',sans-serif;line-height:12px;color:#000;transform:scaleX(0.9807);">22,99</span>
<span class="t" style="left:819.00px;top:682.00px;font:normal normal 11px 'Liberation Sans',sans-serif;line-height:12px;color:#000;transform:scaleX(0.9803);">3,00</span>
<span class="t" style="left:846.00px;top:682.00px;font:normal normal 11px 'Liberation Sans',sans-serif;line-height:12px;color:#000;transform:scaleX(0.9388);">FEMININO AD.</span>
<span class="t" style="left:728.00px;top:721.00px;font:normal bold 11px 'Liberation Sans',sans-serif;line-height:12px;color:#000;transform:scaleX(0.9636);">Usuário:</span>
<span class="t" style="left:835.50px;top:721.00px;font:normal bold 11px 'Liberation Sans',sans-serif;line-height:12px;color:#000;transform:scaleX(0.9370);">- Estação/Terminal: NOT - ULTRA-PR</span>
</div></body></html>
